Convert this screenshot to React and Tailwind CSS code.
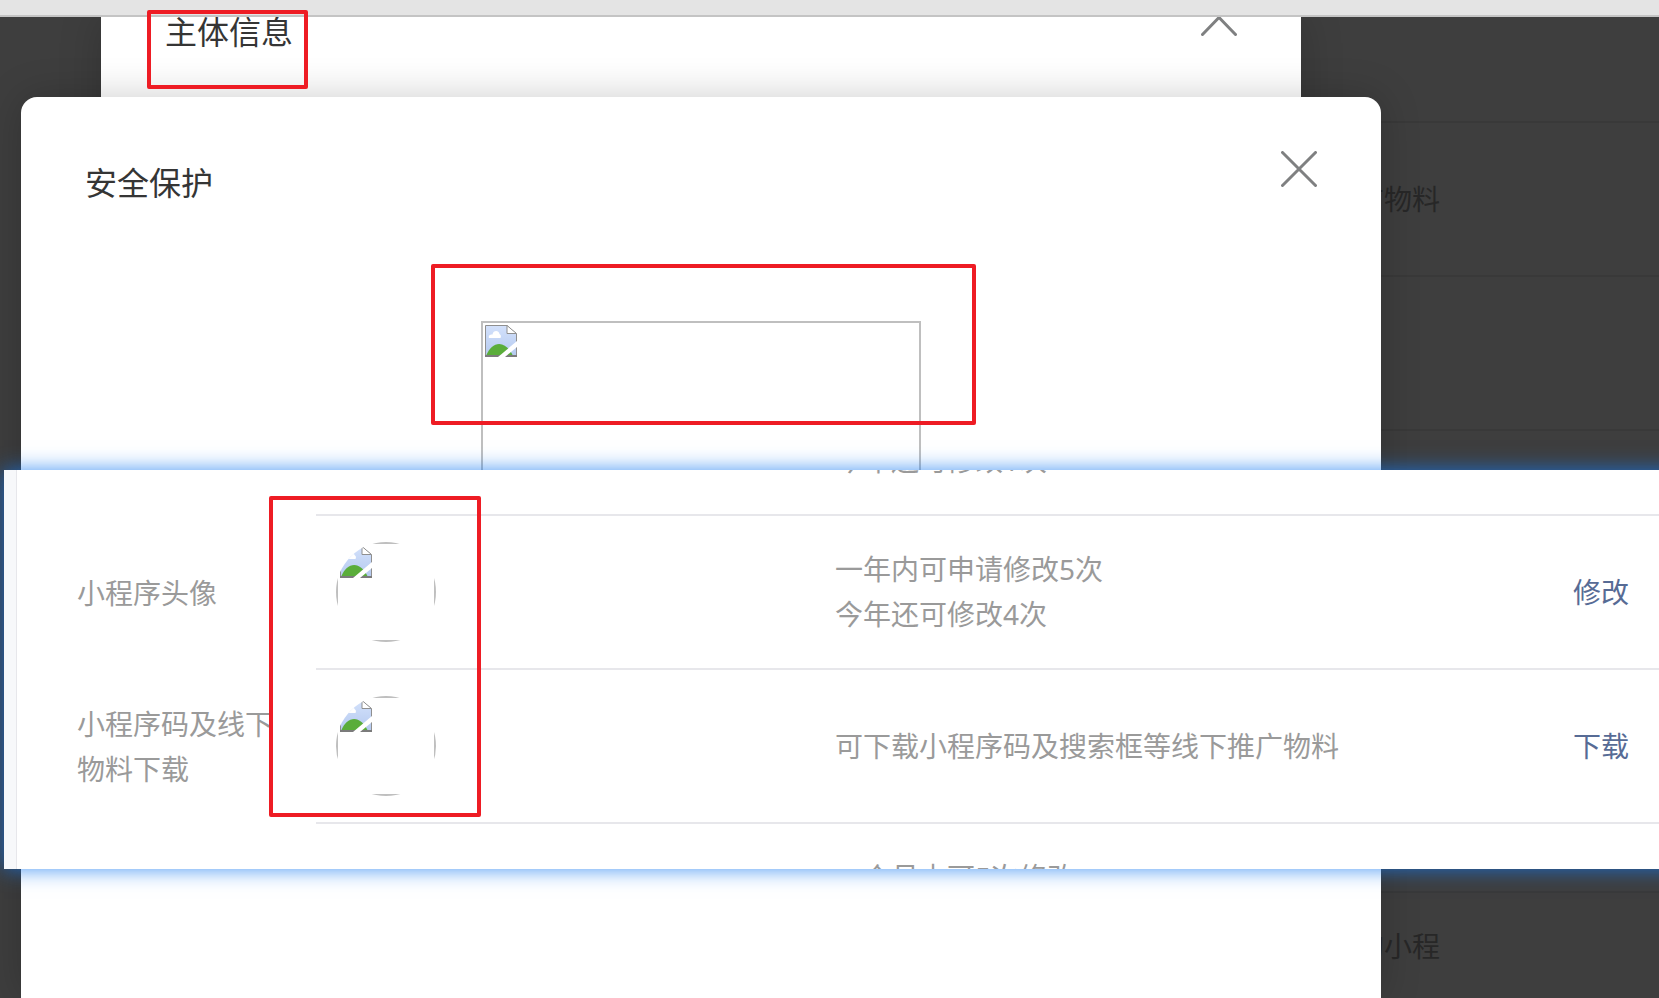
const FONT = 'font-["Noto_Sans","Noto_Sans_CJK_SC",sans-serif]'

const pageRows = [[], ['搜索框等线下推广物料'], [], [], [], [], ['可申请修改的小程', '']]

const tableRows = [
    { label: '', avatar: false, hint: ['一年内可申请修改2次', '今年还可修改1次'], action: '' },
    { label: '小程序头像', avatar: true, hint: ['一年内可申请修改5次', '今年还可修改4次'], action: '修改' },
    { label: '小程序码及线下物料下载', avatar: true, hint: ['可下载小程序码及搜索框等线下推广物料'], action: '下载' },
    { label: '', avatar: false, hint: ['一个月内可5次修改', '本月还可修改5次'], action: '' },
]

function BrokenImage() {
    return (
        <svg width="32" height="32" viewBox="0 0 32 32" aria-hidden="true">
            <defs>
                <linearGradient id="sky" x1="0" y1="0" x2="0" y2="1">
                    <stop offset="0" stopColor="#d3e1fb" />
                    <stop offset="1" stopColor="#b4c9ef" />
                </linearGradient>
            </defs>
            <path d="M0.5 0.5H22L31.5 9V31.5H0.5Z" fill="url(#sky)" stroke="#8f8f8f" />
            <path d="M4 13C3 10 6 9 7.500 9.500C8 5 14 5 14.500 9C16.500 10 16 12 15.500 13Z" fill="#fff" />
            <path d="M1 31C7 16 20 14 28 31Z" fill="#5aad3a" />
            <path d="M0 31H32" stroke="#7b7b7b" strokeWidth="2" />
            <path d="M22 0.500V8.500H31.500Z" fill="#fff" stroke="#8f8f8f" />
            <path d="M32 16V22L20 32H13Z" fill="#fff" />
            <path d="M23 0H32V8Z" fill="#fff" />
        </svg>
    )
}

function Avatar() {
    return (
        <div className="w-[100px] h-[100px] rounded-full overflow-hidden">
            <div className="w-full h-full border-2 border-[#bfbfbf] p-0.5">
                <BrokenImage />
            </div>
        </div>
    )
}

export default function App() {
    return (
        <div className={`relative h-screen overflow-hidden bg-[#3e3e3e] text-[28px] leading-[45px] ${FONT}`}>
            {/* Page under the mask */}
            <div className="relative z-10 h-[17px] bg-[#e4e4e4] border-b-2 border-[#c4c4c4]" />
            <div className="overflow-hidden pl-[936px] text-[#272727]">
                <div className="-mt-12">
                    {pageRows.map((lines, i) => (
                        <div key={i} className="h-[154px] flex flex-col justify-center border-b-2 border-[#393939]">
                            {lines.map((line, j) => <p key={j} className="w-[504px] h-[45px] text-right">{line}</p>)}
                        </div>
                    ))}
                </div>
            </div>

            {/* Back dialog */}
            <section className="absolute top-[17px] left-[101px] w-[1200px] h-[200px] bg-white px-16 flex justify-between items-start shadow-[0_0_40px_rgba(0,0,0,0.2)]">
                <h2 className="text-[32px] leading-[30px] text-[#353535]">主体信息</h2>
                <button aria-label="收起" className="text-[#7f8081]">
                    <svg width="36" height="20" viewBox="0 0 36 20" fill="none" stroke="currentColor" strokeWidth="3" strokeLinecap="round">
                        <path d="M1.500 17.500L18 0.500L34.500 17.500" />
                    </svg>
                </button>
            </section>

            {/* Front dialog */}
            <section className="absolute top-[97px] left-[21px] bottom-0 w-[1360px] rounded-t-2xl bg-white px-16 shadow-[0_0_40px_rgba(0,0,0,0.2)]">
                <header className="flex justify-between items-start pt-[54px]">
                    <h2 className="text-[32px] leading-[64px] text-[#353535]">安全保护</h2>
                    <button aria-label="关闭" className="text-[#7f8081]">
                        <svg width="36" height="36" viewBox="0 0 36 36" fill="none" stroke="currentColor" strokeWidth="3" strokeLinecap="round">
                            <path d="M1.500 1.500L34.500 34.500M34.500 1.500L1.500 34.500" />
                        </svg>
                    </button>
                </header>
                <div className="mx-auto mt-[106px] w-[440px] h-[440px] border-2 border-[#bfbfbf] p-0.5">
                    <BrokenImage />
                </div>
            </section>

            {/* Settings strip */}
            <section className="absolute top-[470px] left-1 -right-6 h-[399px] overflow-hidden bg-white shadow-[0_0_20px_rgba(20,120,240,0.8)] flex text-[#9a9a9a]">
                <div className="w-[13px] shrink-0 bg-[#f7f8fa] border-r border-[#e7e7eb]" />
                <table className="w-full table-fixed border-separate border-spacing-0 self-start -mt-[108px]">
                    <tbody>
                        {tableRows.map((row, i) => (
                            <tr key={i} className="h-[154px]">
                                <th scope="row" className="w-[299px] pl-[60px] pr-10 text-left font-normal">{row.label}</th>
                                <td className="w-[519px] pl-5 border-b-2 border-[#e7e7eb]">{row.avatar && <Avatar />}</td>
                                <td className="border-b-2 border-[#e7e7eb]">
                                    {row.hint.map((line) => <p key={line}>{line}</p>)}
                                </td>
                                <td className="w-[184px] pr-[54px] text-right border-b-2 border-[#e7e7eb]">
                                    {row.action && <a href="#" className="text-[#576b95]">{row.action}</a>}
                                </td>
                            </tr>
                        ))}
                    </tbody>
                </table>
            </section>

            {/* Red marks */}
            <div className="absolute z-10 top-[10px] left-[147px] w-[161px] h-[79px] border-4 border-[#ee1c24] rounded-xs" />
            <div className="absolute z-10 top-[264px] left-[431px] w-[545px] h-[161px] border-4 border-[#ee1c24] rounded-xs" />
            <div className="absolute z-10 top-[496px] left-[269px] w-[212px] h-[321px] border-4 border-[#ee1c24] rounded-xs" />
        </div>
    )
}
